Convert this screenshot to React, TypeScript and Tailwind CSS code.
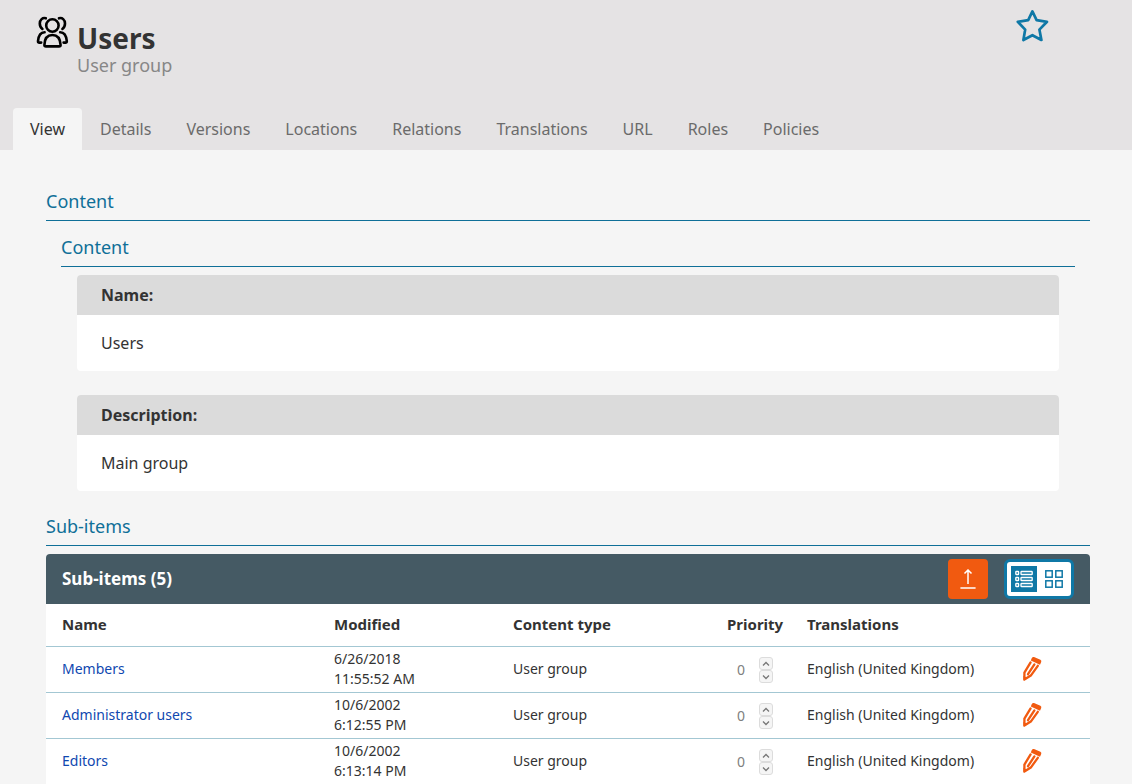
import { useState, type ReactNode } from 'react'

interface SubItem {
  id: number
  name: string
  date: string
  time: string
  contentType: string
  priority: number
  translation: string
}

const TABS = [
  'View',
  'Details',
  'Versions',
  'Locations',
  'Relations',
  'Translations',
  'URL',
  'Roles',
  'Policies',
]

const SUB_ITEMS: SubItem[] = [
  {
    id: 1,
    name: 'Members',
    date: '6/26/2018',
    time: '11:55:52 AM',
    contentType: 'User group',
    priority: 0,
    translation: 'English (United Kingdom)',
  },
  {
    id: 2,
    name: 'Administrator users',
    date: '10/6/2002',
    time: '6:12:55 PM',
    contentType: 'User group',
    priority: 0,
    translation: 'English (United Kingdom)',
  },
  {
    id: 3,
    name: 'Editors',
    date: '10/6/2002',
    time: '6:13:14 PM',
    contentType: 'User group',
    priority: 0,
    translation: 'English (United Kingdom)',
  },
]

export default function App() {
  const [activeTab, setActiveTab] = useState<string>('View')

  return (
    <div className="min-h-screen bg-[#f5f5f5] font-['Noto_Sans',sans-serif] text-[#333333]">
      <header className="flex h-[150px] flex-col justify-between bg-[#e5e3e4]">
        <div className="flex items-start pt-2 pr-[83px] pl-9">
          <div className="flex flex-1 gap-2">
            <UserGroupIcon />
            <div className="pt-3">
              <h1 className="text-[28px] leading-9 font-bold">Users</h1>
              <p className="text-lg leading-[18px] text-[#878787]">User group</p>
            </div>
          </div>
          <button type="button" aria-label="Add to bookmarks" className="pt-0.5">
            <StarIcon />
          </button>
        </div>

        <nav role="tablist" className="flex gap-px pl-[13px]">
          {TABS.map((tab) => (
            <button
              key={tab}
              type="button"
              role="tab"
              aria-selected={tab === activeTab}
              onClick={() => setActiveTab(tab)}
              className={`h-[42px] rounded-t px-[17px] text-base ${
                tab === activeTab ? 'bg-[#f5f5f5] text-[#333333]' : 'text-[#6b6b6b]'
              }`}
            >
              {tab}
            </button>
          ))}
        </nav>
      </header>

      <main className="pt-[38px] pr-[42px] pl-[46px]">
        <section>
          <SectionHeading>Content</SectionHeading>
          <div className="mt-[13px] px-[15px]">
            <SectionHeading>Content</SectionHeading>
            <dl className="mt-2 space-y-6 px-4">
              <FieldCard label="Name:" value="Users" />
              <FieldCard label="Description:" value="Main group" />
            </dl>
          </div>
        </section>

        <section className="mt-[22px]">
          <SectionHeading>Sub-items</SectionHeading>
          <SubItemsPanel />
        </section>
      </main>
    </div>
  )
}

function SectionHeading({ children }: { children: ReactNode }) {
  return (
    <h2 className="border-b border-[#0f6f98] pb-[5px] text-lg leading-[27px] text-[#0f6f98]">
      {children}
    </h2>
  )
}

function FieldCard({ label, value }: { label: string; value: string }) {
  return (
    <div className="overflow-hidden rounded bg-white">
      <dt className="bg-[#dbdbdb] px-6 py-2 leading-6 font-bold">{label}</dt>
      <dd className="px-6 py-4 leading-6">{value}</dd>
    </div>
  )
}

function SubItemsPanel() {
  const [view, setView] = useState<'list' | 'grid'>('list')

  return (
    <div className="mt-2 overflow-hidden rounded-t bg-white">
      <div className="flex h-[50px] items-center bg-[#455a64] px-4">
        <h3 className="flex-1 text-[17px] font-bold text-white">Sub-items (5)</h3>
        <button
          type="button"
          aria-label="Upload"
          className="mr-4 flex size-10 items-center justify-center rounded bg-[#f15a10]"
        >
          <UploadIcon />
        </button>
        <div className="flex h-10 w-[70px] items-center justify-center gap-1 rounded-md border-[3px] border-[#0f78a6] bg-white">
          <button
            type="button"
            aria-label="List view"
            onClick={() => setView('list')}
            className={`flex size-[26px] items-center justify-center ${
              view === 'list' ? 'bg-[#0f78a6] text-white' : 'text-[#0f78a6]'
            }`}
          >
            <ListIcon />
          </button>
          <button
            type="button"
            aria-label="Grid view"
            onClick={() => setView('grid')}
            className={`flex size-[26px] items-center justify-center ${
              view === 'grid' ? 'bg-[#0f78a6] text-white' : 'text-[#0f78a6]'
            }`}
          >
            <GridIcon />
          </button>
        </div>
      </div>

      <table className="w-full table-fixed text-left text-sm">
        <thead>
          <tr className="h-[42px] text-[15px]">
            <th className="pl-4">Name</th>
            <th className="w-[179px] pl-4">Modified</th>
            <th className="w-[214px] pl-4">Content type</th>
            <th className="w-20 pl-4">Priority</th>
            <th className="w-[216px] pl-4">Translations</th>
            <th className="w-[83px]" aria-label="Actions" />
          </tr>
        </thead>
        <tbody>
          {SUB_ITEMS.map((item) => (
            <SubItemRow key={item.id} item={item} />
          ))}
        </tbody>
      </table>
    </div>
  )
}

function SubItemRow({ item }: { item: SubItem }) {
  const [priority, setPriority] = useState<number>(item.priority)

  return (
    <tr className="h-[46px] border-t border-[#a3c7d3]">
      <td className="pl-4">
        <a href="#" className="text-[#1048b0]">
          {item.name}
        </a>
      </td>
      <td className="pl-4">
        {item.date}
        <br />
        {item.time}
      </td>
      <td className="pl-4">{item.contentType}</td>
      <td>
        <div className="flex items-center pt-0.5 pl-[26px]">
          <input
            type="number"
            aria-label={`Priority of ${item.name}`}
            value={priority}
            onChange={(event) => setPriority(Number(event.target.value))}
            className="w-[22px] [appearance:textfield] text-[#808080] [&::-webkit-inner-spin-button]:appearance-none"
          />
          <div className="flex flex-col">
            <button
              type="button"
              aria-label="Increase priority"
              onClick={() => setPriority(priority + 1)}
              className="flex h-[13px] w-[14px] items-center justify-center rounded-[3px] border border-[#dcdcdc] bg-[#f5f5f5]"
            >
              <ChevronIcon path="M1 4.5 4 1.5 7 4.5" />
            </button>
            <button
              type="button"
              aria-label="Decrease priority"
              onClick={() => setPriority(priority - 1)}
              className="flex h-[13px] w-[14px] items-center justify-center rounded-[3px] border border-[#dcdcdc] bg-[#f5f5f5]"
            >
              <ChevronIcon path="M1 1.5 4 4.5 7 1.5" />
            </button>
          </div>
        </div>
      </td>
      <td className="pl-4">{item.translation}</td>
      <td className="pl-[15px]">
        <button type="button" aria-label={`Edit ${item.name}`} className="block">
          <PencilIcon />
        </button>
      </td>
    </tr>
  )
}

function UserGroupIcon() {
  return (
    <svg
      width="33"
      height="48"
      viewBox="0 -8 33 48"
      fill="none"
      stroke="#000000"
      strokeWidth="2.6"
      strokeLinecap="round"
      strokeLinejoin="round"
      aria-hidden="true"
    >
      <circle cx="16.4" cy="9.5" r="6.2" />
      <path d="M8.4 29C8.6 22.2 11.8 19 16.4 19S24.2 22.2 24.6 29Q24.6 30.4 23 30.4H10Q8.4 30.4 8.4 29Z" />
      <path d="M9.8 2.3C6.6 1.3 3.8 3.8 3.8 7.6C3.8 9.8 4.8 11.8 6.4 13M23 2.3C26.2 1.3 29 3.8 29 7.6C29 9.8 28 11.8 26.4 13" />
      <path d="M8.6 16.2C4.2 16.2 2.4 20.6 2 25.2Q2 26.6 3.4 26.6H5.2M24.2 16.2C28.6 16.2 30.4 20.6 30.8 25.2Q30.8 26.6 29.4 26.6H27.6" />
    </svg>
  )
}

function StarIcon() {
  return (
    <svg width="33" height="33" viewBox="0 1 33 33" fill="none" aria-hidden="true">
      <path
        d="M16.4 2.4 20.6 11.2 31 12.8 23.4 20.6 25.4 31 16.4 26.2 7.4 31 9.2 20.6 1.8 12.8 12.2 11.2Z"
        stroke="#0f78a6"
        strokeWidth="2.7"
        strokeLinejoin="round"
      />
    </svg>
  )
}

function UploadIcon() {
  return (
    <svg width="16" height="20" viewBox="0 0 16 20" fill="none" stroke="#ffffff" aria-hidden="true">
      <path d="M8 15V1M4.5 4.5 8 1 11.5 4.5" strokeWidth="1.5" />
      <path d="M1 19H15" strokeWidth="1.6" strokeLinecap="round" />
    </svg>
  )
}

function ListIcon() {
  return (
    <svg
      width="18"
      height="18"
      viewBox="0 0 18 18"
      fill="none"
      stroke="currentColor"
      strokeWidth="1.3"
      aria-hidden="true"
    >
      {[1.5, 7.5, 13.5].map((y) => (
        <g key={y}>
          <rect x="0.8" y={y} width="2.8" height="3" rx="0.6" />
          <rect x="6" y={y} width="11.2" height="3" rx="0.6" />
        </g>
      ))}
    </svg>
  )
}

function GridIcon() {
  return (
    <svg
      width="18"
      height="18"
      viewBox="0 0 18 18"
      fill="none"
      stroke="currentColor"
      strokeWidth="1.5"
      aria-hidden="true"
    >
      <rect x="0.8" y="0.8" width="6.4" height="6.4" />
      <rect x="10.8" y="0.8" width="6.4" height="6.4" />
      <rect x="0.8" y="10.8" width="6.4" height="6.4" />
      <rect x="10.8" y="10.8" width="6.4" height="6.4" />
    </svg>
  )
}

function ChevronIcon({ path }: { path: string }) {
  return (
    <svg width="8" height="6" viewBox="0 0 8 6" fill="none" aria-hidden="true">
      <path d={path} stroke="#777777" strokeWidth="1.3" />
    </svg>
  )
}

function PencilIcon() {
  return (
    <svg width="20" height="26" viewBox="0 0 20 26" fill="none" aria-hidden="true">
      <path
        d="M9.8 2Q10.6 0.6 12 1L18.4 3.8Q19.8 4.6 19.2 6L18 8.8 8.8 4.4Z"
        fill="#f15a10"
      />
      <path
        d="M8.6 6.4 2.4 16.6V23.6L8.8 19.6 15.8 9.8M12.4 8.4 6 18.2"
        stroke="#f15a10"
        strokeWidth="2.3"
        strokeLinejoin="round"
        strokeLinecap="round"
      />
      <path d="M1.4 19.8 5.4 22.2 1.6 24.8Z" fill="#f15a10" />
    </svg>
  )
}
